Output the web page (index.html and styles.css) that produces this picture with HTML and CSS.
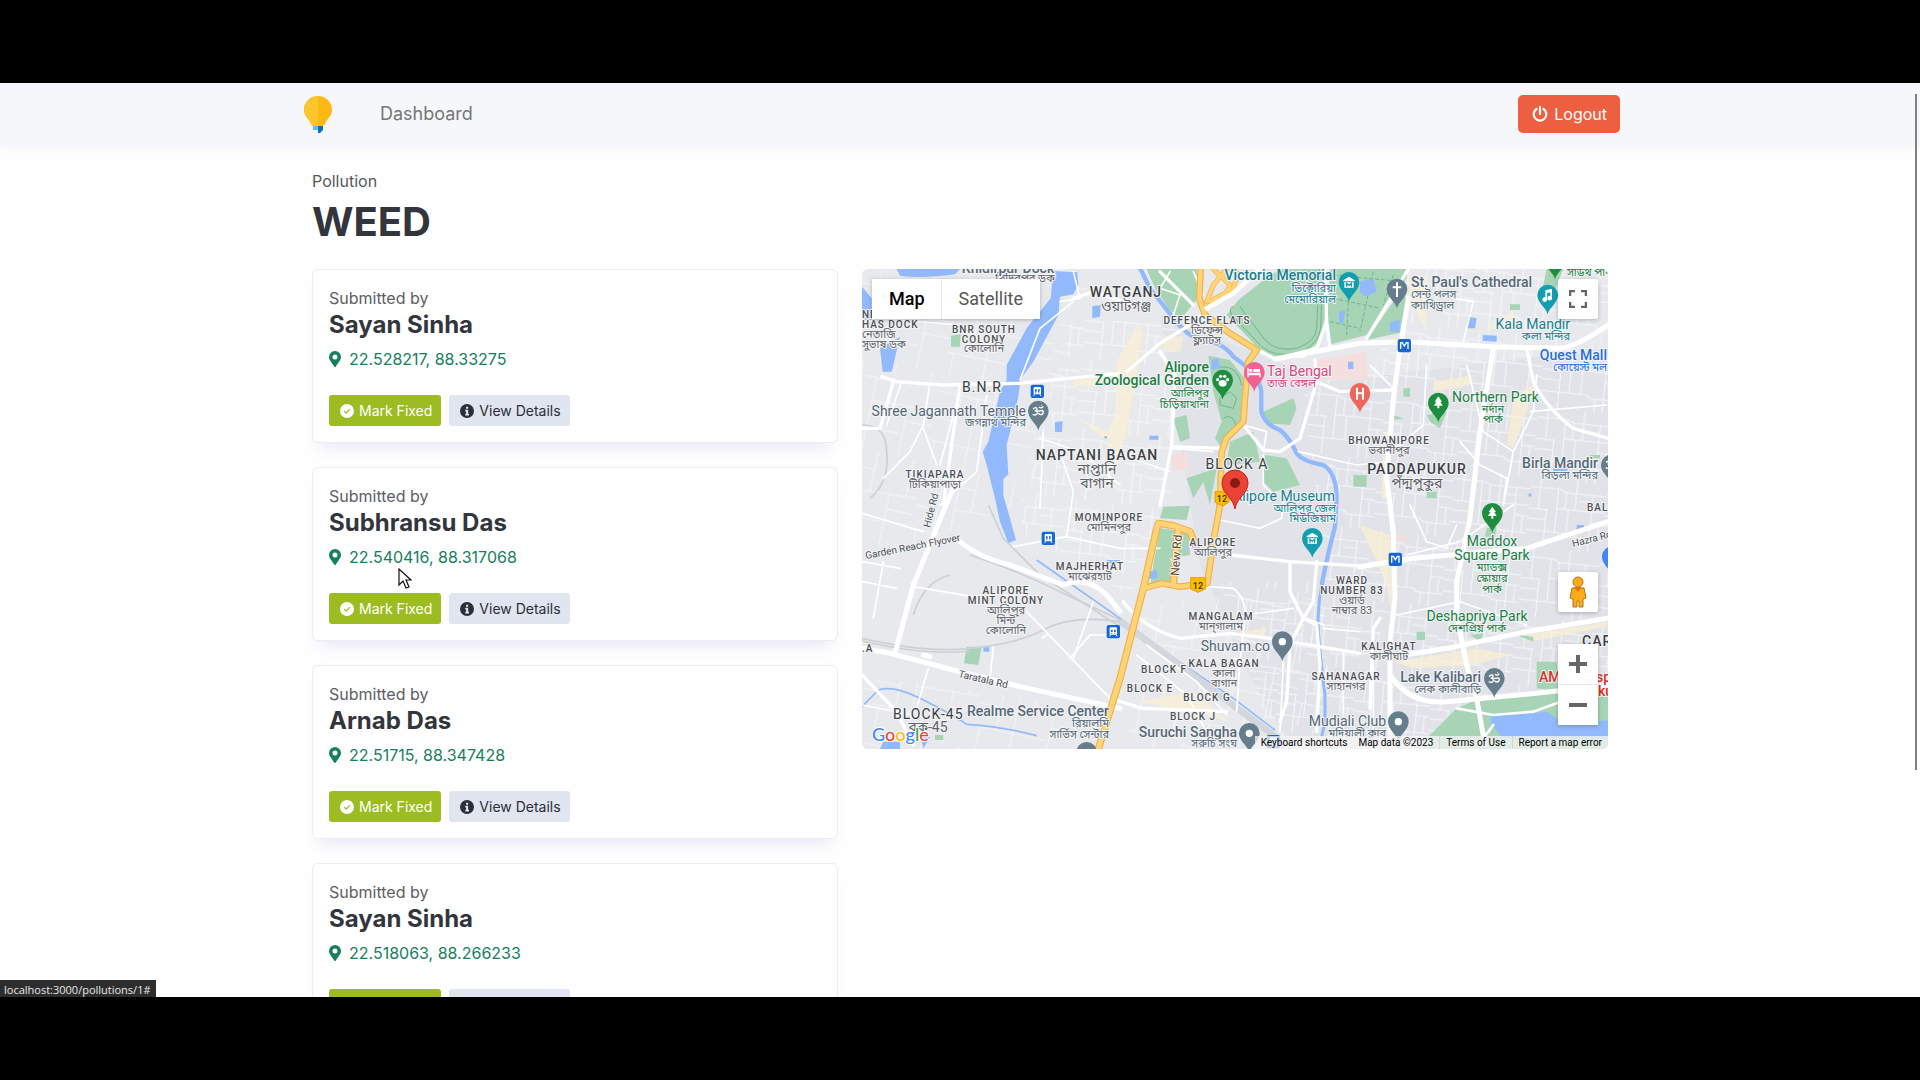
FILE: index.html
```html
<!DOCTYPE html>
<html lang="en">
<head>
<meta charset="utf-8">
<title>Pollution - WEED</title>
<link rel="stylesheet" href="styles.css">
</head>
<body>
<svg class="defs" aria-hidden="true">
  <symbol id="i-pin" viewBox="0 0 384 512"><path fill="currentColor" fill-rule="evenodd" d="M172 502C27 291 0 270 0 192a192 192 0 1 1 384 0c0 78-27 99-172 310a24 24 0 0 1-40 0zM192 272a80 80 0 1 0 0-160 80 80 0 0 0 0 160z"/></symbol>
  <symbol id="i-check" viewBox="0 0 16 16"><circle cx="8" cy="8" r="8" fill="currentColor"/><path d="M4.800 8.200l2.200 2.300 4.300-4.700" fill="none" stroke="#9dbc21" stroke-width="1.400"/></symbol>
  <symbol id="i-info" viewBox="0 0 16 16"><circle cx="8" cy="8" r="8" fill="currentColor"/><path d="M7 3h2.300v2.300H7zM6 6.500h3.300v4.500h1V13H6v-2h1V8.500H6z" fill="#e0e5ef"/></symbol>
</svg>
<div class="screen">
  <header class="navbar">
    <div class="container navbar-inner">
      <a class="brand" href="#" aria-label="Home">
        <svg width="30" height="38" viewBox="0 0 30 38"><path d="M15 1a14 14 0 0 0-14 14c0 6 5 9 6 12l1 2q1 2 3 2h8q2 0 3-2l1-2c1-3 6-6 6-12A14 14 0 0 0 15 1z" fill="#fdb913"/><path d="M15 1a14 14 0 0 0-14 14c0 6 5 9 6 12l1 2q1 2 3 2h4z" fill="#fbc52d"/><path d="M10 31h5v4h-5z" fill="#5bc0f2"/><path d="M15 31h5v4l-3 3h-2z" fill="#0b6fb8"/></svg>
      </a>
      <a class="nav-link" href="#">Dashboard</a>
      <button class="btn-logout" type="button">
        <svg width="16" height="16" viewBox="0 0 16 16"><path d="M4.500 3a6.300 6.300 0 1 0 7 0M8 1v7" fill="none" stroke="currentColor" stroke-width="2.200" stroke-linecap="round"/></svg>
        Logout
      </button>
    </div>
  </header>
  <main class="container">
    <p class="eyebrow">Pollution</p>
    <h1>WEED</h1>
    <div class="row">
      <section class="reports">
        <article class="card">
          <p>Submitted by</p><h2>Sayan Sinha</h2>
          <a class="coords" href="#"><svg><use href="#i-pin"/></svg>22.528217, 88.33275</a>
          <div class="actions"><button class="btn fix"><svg><use href="#i-check"/></svg>Mark Fixed</button><button class="btn view"><svg><use href="#i-info"/></svg>View Details</button></div>
        </article>
        <article class="card">
          <p>Submitted by</p><h2>Subhransu Das</h2>
          <a class="coords" href="#"><svg><use href="#i-pin"/></svg>22.540416, 88.317068</a>
          <div class="actions"><button class="btn fix"><svg><use href="#i-check"/></svg>Mark Fixed</button><button class="btn view"><svg><use href="#i-info"/></svg>View Details</button></div>
        </article>
        <article class="card">
          <p>Submitted by</p><h2>Arnab Das</h2>
          <a class="coords" href="#"><svg><use href="#i-pin"/></svg>22.51715, 88.347428</a>
          <div class="actions"><button class="btn fix"><svg><use href="#i-check"/></svg>Mark Fixed</button><button class="btn view"><svg><use href="#i-info"/></svg>View Details</button></div>
        </article>
        <article class="card">
          <p>Submitted by</p><h2>Sayan Sinha</h2>
          <a class="coords" href="#"><svg><use href="#i-pin"/></svg>22.518063, 88.266233</a>
          <div class="actions"><button class="btn fix"><svg><use href="#i-check"/></svg>Mark Fixed</button><button class="btn view"><svg><use href="#i-info"/></svg>View Details</button></div>
        </article>
      </section>
      <section class="map-col">
        <div class="map">
          <svg class="map-canvas" viewBox="0 0 746 480" preserveAspectRatio="xMidYMid slice">
            <svg width="746" height="480" viewBox="6 12 2238 1440">
              <defs>
                <pattern id="streets-a" width="230" height="210" patternUnits="userSpaceOnUse" patternTransform="rotate(6)">
                  <path d="M0 30H90L110 38H230M0 95H60M84 88H230M0 160H140L150 170H230M30 0V95M85 30V160M140 0V88M190 38V210M55 95V210M120 88V160M165 170V210M110 38V88M0 125H55M190 120H230M215 120V170M150 60H190" fill="none" stroke="#f6f7f9" stroke-width="3"/>
                </pattern>
                <pattern id="streets-b" width="310" height="270" patternUnits="userSpaceOnUse" patternTransform="rotate(12)">
                  <path d="M0 50H170M120 120L310 110M0 200H220M70 0V200M170 0V120M230 110V270M120 50V270M280 0V110M20 200V270M230 160H310M0 130H70" fill="none" stroke="#f4f5f7" stroke-width="3"/>
                </pattern>
                <path id="p" d="M0 58C-4 38-31 24-31 0A31 31 0 1 1 31 0C31 24 4 38 0 58Z"/>
                <path id="tree" d="M0-20L-11-4h5L-13 8h10v8h6V8h10L6-4h5z" fill="#fff"/>
                <g id="train"><rect x="-20" y="-20" width="40" height="40" rx="6" fill="#1967d2"/><path d="M-11-9q0-4 4-4h14q4 0 4 4V9h-22z" fill="#fff"/><path d="M-7-6h5v7h-5zM2-6h5v7H2zM-6 3h3v3h-3zM3 3h3v3H3z" fill="#1967d2"/><path d="M-8 9l-3 5M8 9l3 5" stroke="#fff" stroke-width="3"/></g>
                <g id="museum"><path d="M-17-6L0-17 17-6v3h-34zM-14 0h28v16h-28z" fill="#fff"/><path d="M-7 13V3l7 6 7-6v10" stroke="#129eaf" stroke-width="4" fill="none"/></g>
                <path id="om" d="M-16-8q12-8 12 0 0 5-7 5 9 1 8 8-3 8-14 3M-3-2h8q7-4 10 2 0 9-8 9-5 0-6-5M2-14q7 6 13-2M8-19h2" fill="none" stroke="#fff" stroke-width="4"/>
              </defs>
              <path fill="#e7e9ed" d="M0 0H2300V1500H0z"/>
              <path fill="#e1e3e9" d="M900 150L1400 350 2250 250V1460H1300L1150 1200 1020 900z"/>
              <!-- built-up street meshes -->
              <path fill="url(#streets-b)" d="M0 0H700L520 700 0 900zM0 1230L700 1330V1460H0zM850 1000L1400 1000V1460H800z"/>
              <path fill="url(#streets-a)" d="M640 160L950 180 930 720 820 1000 480 800 540 500zM1320 320L2250 250V1460H1330L1400 900zM1560 12H2250V300H1560zM1080 950H1400V1460H1250z"/>
              <!-- commercial strips and campuses -->
              <g fill="#fbefd2" opacity=".7">
                <path d="M640 345L780 335 770 355 640 365zM655 460L740 500 770 440 790 520 770 620 745 530zM770 290L830 180 850 200 800 500 770 600zM910 210L970 215 960 260 910 255zM1640 40L1700 30 1700 200 1660 120zM1880 180L1960 140 1970 180 1890 195zM1720 350L1840 330 1830 360 1720 380zM1960 400L2030 350 2010 410 1960 550 1940 540zM1500 780L1590 810 1610 960 1600 1080 1580 960zM1600 1190L1850 1150 1950 1170 1840 1200 1660 1210zM2000 1110L2240 1070V1085L2010 1130zM830 1310L1000 1280 1110 1370 1000 1340zM1140 1100L1220 1090 1210 1115 1140 1120zM1570 500L1595 500 1580 700 1565 700z"/>
              </g>
              <path fill="#f5dede" d="M1360 285L1515 262 1525 345 1370 345zM930 570L980 560 985 610 940 620zM1600 815L1640 810 1635 840z"/>
              <g fill="#a6d4b5">
                <path d="M860 12H1010V105L960 165 925 130 885 70zM1100 150L1135 105 1230 30 1270 12H1395L1400 130 1380 230 1320 272 1245 278 1195 250zM1412 12H1640V40L1580 120 1520 210 1405 240 1400 160zM1620 80L1650 110 1635 200 1520 225zM1045 272L1110 285 1150 335 1150 480 1110 510 1085 550 1065 520 1085 470 1060 380zM1210 440L1300 400 1310 430 1290 480 1220 475zM940 460L980 450 990 520 960 530zM1110 530L1180 500 1200 590 1100 600zM1215 570L1280 580 1320 660 1240 680 1210 650zM980 640L1070 610 1050 720 1030 650 1000 700zM273 212L302 208 300 245 273 245zM910 725L990 722 980 765 900 760zM900 790L985 800 990 870 930 880 950 950 870 970 880 900zM2060 12H2110L2070 110 2050 60zM1950 118H1980V135H1950zM1700 450L1760 440 1740 490 1710 470zM1880 790L1910 785 1905 815 1875 815zM1670 1100H1695V1125H1670zM1830 1110L1870 1105 1860 1130zM1970 1110L2020 1115 2020 1130zM2030 1190L2090 1190 2100 1280 2030 1270zM1700 1420L1790 1330 1860 1300 2110 1275 2244 1260V1452H1690zM1630 370H1650V395H1630zM1600 450L1630 460 1600 465zM1480 630H1520V665H1480zM1700 680H1730V700H1700zM2190 570H2220V580H2190zM320 1145L365 1145 355 1200 312 1195zM225 1410H250V1425H225z"/>
              </g>
              <g fill="none" stroke="#74b38a" stroke-width="3">
                <path d="M1122 125Q1105 125 1115 150L1205 245Q1245 280 1320 263 1378 235 1382 190L1388 12M1140 125L1215 225Q1250 262 1310 250 1368 230 1370 190L1378 12"/>
                <path stroke-dasharray="12 6" d="M1420 30L1630 50M1420 100L1560 130M1410 170L1500 190M1470 20L1460 210M1540 20L1500 200M1600 30L1570 120"/>
                <path d="M1080 400L1110 380 1130 400 1120 430 1080 420zM1090 460Q1120 440 1130 490M1060 310Q1130 290 1145 360"/>
              </g>
              <!-- water -->
              <g fill="#92b9fb">
                <path d="M110 12H300L285 28Q180 42 120 32zM6 65L35 100V165H6zM60 250L120 215 95 320H68zM580 18L652 22 655 60 640 88 600 95 595 150 520 290 482 342 475 395 450 500 440 540 445 628 430 642 430 690 468 825 445 835 420 770 405 700 380 600 368 560 385 530 420 380 440 345 440 300 500 190 572 100zM697 124L722 120 720 155 697 160zM585 472L608 468 606 502 585 500zM868 512H895V524H868zM1055 285L1075 280 1080 310 1055 315zM1437 140L1455 138 1450 175 1437 172zM1464 290H1480V312H1464zM1500 50L1540 40 1550 80 1515 95 1500 80zM1590 170L1620 165 1618 200 1590 200zM1825 155L1850 160 1845 190 1820 190zM1868 210L1910 212V230L1868 228zM2080 610H2122V620H2080zM2150 780H2172V795H2150zM863 920L890 915 892 940 865 942zM370 1145H388V1160H370zM740 885H780V896H740zM180 1410L200 1395 210 1420 190 1450zM1890 1350L1960 1350 2060 1340 2120 1380 2244 1365V1420H1930L1895 1380zM70 1430H120V1452H60z"/>
                <circle cx="737" cy="517" r="4"/><circle cx="2010" cy="690" r="5"/>
              </g>
              <g fill="none" stroke="#92b9fb">
                <path stroke-width="13" d="M838 5L870 70 925 140Q970 200 1000 215 1090 230 1120 275 1200 330 1204 380V440Q1215 480 1260 495 1290 520 1310 565 1330 590 1390 600 1430 625 1430 700L1425 785Q1400 880 1385 960"/>
                <path stroke-width="9" d="M1385 960Q1372 1030 1375 1100 1383 1200 1395 1290V1370L1385 1415"/>
                <path stroke-width="5" d="M530 885L780 1060 950 1185 1120 1300 1245 1395M6 1325L55 1275Q100 1260 180 1300 280 1350 320 1378 430 1385 530 1412"/>
              </g>
              <!-- railway lines -->
              <g fill="none" stroke="#cdcfd4" stroke-width="5">
                <path d="M6 1120Q200 1165 330 1150 480 1135 560 1090 640 1050 780 1070L950 1200 1260 1430M330 870Q480 920 600 980L780 1065M6 1128Q200 1173 330 1158M385 720L430 820 540 930 780 1085M6 480Q80 480 80 560 90 650 30 700M160 1050Q190 950 270 930"/>
                <path stroke-width="20" stroke="#d3d6dd" d="M780 1068L1280 1440"/>
              </g>
              <!-- secondary roads -->
              <g fill="none" stroke="#fff" stroke-linecap="round" stroke-linejoin="round">
                <path stroke-width="5" d="M60 160L300 180M125 350L80 480M210 355L190 480 150 560 70 640M300 375L240 600M380 390L350 620 240 720M6 745L90 770 190 800M160 965L370 1000M190 490L230 600M480 345L540 190 640 110M640 20L660 100 600 110M540 520L660 560 780 660M460 845L620 815 780 850 900 850M620 815L640 680 600 560M500 1040L750 1300M630 1180L690 1110 780 1110M6 1320L160 1350M205 1210L170 1330M400 1145L390 1240M545 1120L560 1110M700 1010L640 1180M980 960L1120 970Q1160 1000 1155 1060L1140 1190 1130 1340M1155 1050L1300 1030M1080 765L1200 790 1265 760 1270 700M1210 560L1220 500 1150 480M1210 570L1210 660 1240 690M1315 560L1490 600 1590 590M1800 530L1860 600 1940 640 1930 720M1530 300L1600 370M1780 100L1840 110 1810 230M1700 300L1690 480 1620 540M2030 330L2020 440 1960 560 1930 720M2010 440L2240 420M1650 720L1700 830 1760 850 1790 780M1610 1050L1800 1010 2000 1080M1640 870L1800 830 1960 720M1820 300L1870 500 1960 560M1340 1060L1390 1080M1450 1160V1420M1540 1160V1400M1060 560L940 550M930 620L760 560M550 500L540 730M470 1010L420 980M6 890L120 910M6 950L110 970M70 890L40 1060M1030 90L1000 20M930 20L900 70 960 90 940 150M830 1170L980 1290 1040 1400M860 1140L1010 1250 1100 1350M1180 1190L1120 1180M1270 1190L1260 1400M1500 1100L1390 1090"/>
                <path stroke-width="10" d="M65 335L110 350 250 360 475 355 780 325M800 320L900 235 990 180 1080 100M900 260L945 330 935 540 900 720M935 545L1090 550M1150 480L1210 555 1260 560 1320 520 1370 350 1365 285M1245 282L1205 260M1395 12L1400 170 1370 250 1245 282M1400 170L1410 245M1645 12L1580 120 1520 220M2000 250L2020 350Q2060 430 2140 490L2244 520M6 490L60 490 100 350M1370 350L1440 380 1600 375M1290 270L1330 275M640 100L700 80 790 110M250 720L300 360M1560 1060L1540 1090 1535 1200 1530 1330M900 20L1000 120M790 1010Q850 1090 960 1120L1110 1105 1230 1120 1500 1165M1370 890L1360 1010 1330 1060 1290 1140 1280 1310 1260 1370M1290 890L1290 980 1330 1060 1370 1080 1380 1200 1370 1400M6 1230L110 1340 160 1440M750 1300L850 1330 1100 1340M1110 870L1290 890 1530 905"/>
                <path stroke-width="15" d="M1245 282L1500 235 1640 230 1900 245 2100 250Q2150 245 2244 180M1645 100L1620 250 1600 400 1580 640 1600 800 1605 1000 1590 1130 1590 1230Q1650 1320 1760 1310L2030 1285 2244 1260M1900 250L1860 500 1830 760 1790 950 1790 1050 1820 1200 1850 1300 1875 1440M1500 905L1660 880 2000 850 2244 770M1600 1175L1760 1150 2000 1100 2244 1060M6 1150L90 1165 280 1215 480 1265 780 1330M105 1165L160 960 250 740 300 620M300 830Q360 880 450 900L610 960Q680 930 740 990L780 1040M1590 1230L1590 1440M190 1170L210 1175"/>
                <path stroke-width="8" d="M1790 1330L1900 1350 2020 1340 2130 1300M1870 1420L1900 1380"/>
              </g>
              <!-- highway -->
              <g fill="none" stroke-linejoin="round" stroke-linecap="round">
                <g stroke="#f1b04a">
                  <path stroke-width="20" d="M1022 12L1018 100 1035 150 1110 205 1190 255 1165 290 1155 400 1150 470 1100 520 1085 560 1080 720 1060 830 1042 955 960 965 905 955 850 970"/>
                  <path stroke-width="22" d="M1080 720L1100 700M850 970L780 1240 715 1452M850 970L890 790 895 775 940 782 990 800 1010 850M955 790L940 960"/>
                  <path stroke-width="15" d="M1060 12L1110 60 1090 100 1035 130M1100 12L1060 60 1040 110M1135 25L1120 70 1050 110"/>
                </g>
                <g stroke="#ffd476">
                  <path stroke-width="13" d="M1022 12L1018 100 1035 150 1110 205 1190 255 1165 290 1155 400 1150 470 1100 520 1085 560 1080 720 1060 830 1042 955 960 965 905 955 850 970"/>
                  <path stroke-width="15" d="M850 970L780 1240 715 1452M850 970L890 790 895 775 940 782 990 800 1010 850M955 790L940 960"/>
                  <path stroke-width="11" d="M1060 12L1110 60 1090 100 1035 130M1100 12L1060 60 1040 110M1135 25L1120 70 1050 110"/>
                </g>
              </g>
              <path d="M1035 133L1120 85 1200 12" fill="none" stroke="#fff" stroke-width="14"/>
              <g fill="#fbbc04" stroke="#f29900" stroke-width="3"><path d="M1065 680H1107V712L1086 722 1065 712zM992 938H1036V972L1014 982 992 972z"/></g>
              <!-- places -->
              <g fill="#667d8b">
                <use href="#p" x="535" y="438"/><use href="#p" x="1611" y="72"/><use href="#p" x="2254" y="600"/><use href="#p" x="1267" y="1130"/><use href="#p" x="1903" y="1240"/><use href="#p" x="1615" y="1370"/><use href="#p" x="1168" y="1405"/><use href="#p" x="680" y="1462"/>
              </g>
              <g fill="#129eaf"><use href="#p" x="1467" y="52"/><use href="#p" x="2063" y="90"/><use href="#p" x="1357" y="820"/></g>
              <g fill="#1e8e3e"><use href="#p" x="1088" y="345"/><use href="#p" x="1735" y="414"/><use href="#p" x="1897" y="745"/><use href="#p" x="2085" y="-15"/></g>
              <use href="#p" x="1183" y="322" fill="#f06292"/><use href="#p" x="1500" y="385" fill="#ee675c"/><use href="#p" x="2257" y="875" fill="#4285f4"/>
              <use href="#museum" x="1467" y="52"/><use href="#museum" x="1357" y="820"/>
              <use href="#tree" x="1735" y="414"/><use href="#tree" x="1897" y="745"/>
              <use href="#om" x="535" y="440"/><use href="#om" x="1903" y="1242"/><use href="#om" x="2254" y="600"/>
              <g fill="#fff"><circle cx="1267" cy="1130" r="11"/><circle cx="1615" cy="1370" r="11"/><circle cx="1168" cy="1405" r="11"/>
                <ellipse cx="1088" cy="355" rx="12" ry="10"/><circle cx="1073" cy="344" r="5"/><circle cx="1082" cy="334" r="5"/><circle cx="1094" cy="334" r="5"/><circle cx="1103" cy="344" r="5"/>
                <path d="M1608 52h6v12h10v6h-10v26h-6V70h-10v-6h10zM1162 308h4v15h36v14h-4v-6h-32v6h-4zM1180 312h20v9h-20zM1488 368h6v14h12v-14h6v36h-6v-16h-12v16h-6zM2056 76l20-5v28a7 7 0 1 1-5-6V82l-10 3v18a7 7 0 1 1-5-6z"/><circle cx="1172" cy="316" r="5"/></g>
              <use href="#train" x="532" y="379"/><use href="#train" x="565" y="820"/><use href="#train" x="760" y="1100"/><use href="#train" x="1240" y="1430"/>
              <g fill="#1967d2"><rect x="1613" y="222" width="40" height="40" rx="6"/><rect x="1586" y="863" width="40" height="40" rx="6"/></g>
              <path d="M1622 252v-19h5l6 10 6-10h5v19M1595 893v-19h5l6 10 6-10h5v19" fill="none" stroke="#fff" stroke-width="4"/>
            </svg>
            <g class="lbl area">
              <text x="0" y="49">NE</text><text x="0" y="59">HAS DOCK</text><text class="mid" x="122" y="64">BNR SOUTH</text><text class="mid" x="122" y="74">COLONY</text>
              <text class="mid" x="345" y="55">DEFENCE FLATS</text><text class="mid" x="73" y="209">TIKIAPARA</text><text class="mid" x="527" y="175">BHOWANIPORE</text>
              <text class="mid" x="247" y="252">MOMINPORE</text><text class="mid" x="228" y="301">MAJHERHAT</text><text class="mid" x="144" y="325">ALIPORE</text><text class="mid" x="144" y="335">MINT COLONY</text>
              <text class="mid" x="351" y="277">ALIPORE</text><text class="mid" x="359" y="351">MANGALAM</text><text class="mid" x="490" y="315">WARD</text><text class="mid" x="490" y="325">NUMBER 83</text>
              <text class="mid" x="302" y="404">BLOCK F</text><text class="mid" x="288" y="423">BLOCK E</text><text class="mid" x="345" y="432">BLOCK G</text><text class="mid" x="331" y="451">BLOCK J</text>
              <text class="mid" x="362" y="398">KALA BAGAN</text><text class="mid" x="484" y="411">SAHANAGAR</text><text class="mid" x="527" y="381">KALIGHAT</text><text x="725" y="242">BAL</text><text x="0" y="383">.A</text>
            </g>
            <g class="lbl district">
              <text class="mid" x="264" y="28">WATGANJ</text><text class="mid light" x="120" y="123">B.N.R</text><text class="mid" x="235" y="191">NAPTANI BAGAN</text><text class="mid" x="555" y="205">PADDAPUKUR</text>
              <text class="mid light" x="375" y="200">BLOCK A</text><text class="light" x="31" y="450">BLOCK-45</text><text x="720" y="377">CAR</text>
            </g>
            <g class="lbl bn">
              <text class="mid" x="163" y="13">খিদিরপুর ডক</text><text x="0" y="69">নেতাজি</text><text x="0" y="79">সুভাষ ডক</text><text class="mid" x="122" y="83">কোলোনি</text><text class="mid" x="345" y="65">ডিফেন্স</text><text class="mid" x="345" y="75">ফ্ল্যাটস</text>
              <text class="mid" x="73" y="219">টিকিয়াপাড়া</text><text class="mid" x="527" y="185">ভবানীপুর</text><text class="mid" x="247" y="262">মোমিনপুর</text><text class="mid" x="228" y="311">মাঝেরহাট</text>
              <text class="mid" x="144" y="345">আলিপুর</text><text class="mid" x="144" y="355">মিন্ট</text><text class="mid" x="144" y="365">কোলোনি</text><text class="mid" x="351" y="287">আলিপুর</text><text class="mid" x="359" y="361">মান্‌গালাম</text>
              <text class="mid" x="490" y="335">ওয়ার্ড</text><text class="mid" x="490" y="345">নাম্বার 83</text><text class="mid" x="362" y="408">কালা</text><text class="mid" x="362" y="418">বাগান</text><text class="mid" x="484" y="421">সাহানগর</text><text class="mid" x="527" y="391">কালীঘাট</text>
            </g>
            <g class="lbl bn large"><text class="mid" x="264" y="42">ওয়াটগঞ্জ</text><text class="mid" x="235" y="205">নাপ্তানি</text><text class="mid" x="235" y="219">বাগান</text><text class="mid" x="555" y="219">পঁদ্মপুকুর</text><text class="mid" x="66" y="463">ব্লক-45</text></g>
            <g class="lbl place slate">
              <text class="mid" x="146" y="4">Khidirpur Dock</text><text class="end light" x="164" y="147">Shree Jagannath Temple</text><text x="549" y="18">St. Paul's Cathedral</text><text class="end" x="736" y="199">Birla Mandir</text>
              <text class="end light" x="408" y="382">Shuvam.co</text><text class="end" x="619" y="413">Lake Kalibari</text><text class="end light" x="524" y="457">Mudiali Club</text><text class="end" x="375" y="468">Suruchi Sangha</text><text class="end" x="247" y="447">Realme Service Center</text>
              <g class="sub"><text class="end" x="164" y="157">জগন্নাথ মন্দির</text><text x="549" y="29">সেন্ট পলস</text><text x="549" y="40">ক্যাথিড্রাল</text><text class="end" x="736" y="210">বিড়লা মন্দির</text><text class="end" x="619" y="424">লেক কালীবাড়ি</text><text class="end" x="524" y="468">মদিয়ালী ক্লাব</text><text class="end" x="375" y="478">সরুচি সংঘ</text><text class="end" x="247" y="458">রিয়ালমি</text><text class="end" x="247" y="469">সার্ভিস সেন্টার</text></g>
            </g>
            <g class="lbl place teal">
              <text class="end" x="474" y="11">Victoria Memorial</text><text class="end light" x="708" y="60">Kala Mandir</text><text class="end light" x="473" y="232">Alipore Museum</text>
              <g class="sub"><text class="end" x="474" y="23">ভিক্টোরিয়া</text><text class="end" x="474" y="34">মেমোরিয়াল</text><text class="end" x="708" y="71">কলা মন্দির</text><text class="end" x="474" y="243">আলিপুর জেল</text><text class="end" x="474" y="253">মিউজিয়াম</text></g>
            </g>
            <g class="lbl place green">
              <text class="end" x="347" y="103">Alipore</text><text class="end" x="347" y="116">Zoological Garden</text><text class="light" x="590" y="133">Northern Park</text><text class="mid light" x="630" y="277">Maddox</text><text class="mid light" x="630" y="291">Square Park</text><text class="mid light" x="615" y="352">Deshapriya Park</text>
              <g class="sub"><text class="end" x="347" y="128">আলিপুর</text><text class="end" x="347" y="139">চিড়িয়াখানা</text><text class="mid" x="631" y="144">নর্দান</text><text class="mid" x="631" y="154">পার্ক</text><text class="mid" x="630" y="302">ম্যাডক্স</text><text class="mid" x="630" y="313">স্কোয়ার</text><text class="mid" x="630" y="324">পার্ক</text><text class="mid" x="615" y="363">দেশপ্রিয় পার্ক</text><text x="705" y="7">সাউথ পার্ক</text></g>
            </g>
            <g class="lbl place pink"><text class="light" x="405" y="107">Taj Bengal</text><text class="small" x="405" y="118">তাজ বেঙ্গল</text></g>
            <g class="lbl place blue"><text class="end" x="745" y="91">Quest Mall</text><text class="small end" x="745" y="102">কোয়েস্ট মল</text></g>
            <g class="lbl place red"><text x="677" y="413">AM</text><text x="734" y="413">sp</text><text x="736" y="427">ku</text></g>
            <g class="lbl road">
              <text transform="translate(68 259) rotate(-76)">Hide Rd</text><text transform="translate(4 290) rotate(-11)">Garden Reach Flyover</text><text transform="translate(317 307) rotate(-86)" class="brown">New Rd</text>
              <text transform="translate(96 408) rotate(13)">Taratala Rd</text><text transform="translate(711 278) rotate(-14)">Hazra Rd</text>
            </g>
            <g class="shield"><text x="360" y="233">12</text><text x="336" y="320">12</text></g>
            <path d="M373 240C371 228 360 225 360 214A13 13 0 0 1 386 214C386 225 375 228 373 240Z" fill="#ea4335" stroke="#c5221f"/><circle cx="373" cy="214" r="5" fill="#8b1a14"/>
            <text class="glogo" x="10" y="472"><tspan fill="#4285f4">G</tspan><tspan fill="#ea4335">o</tspan><tspan fill="#fbbc04">o</tspan><tspan fill="#4285f4">g</tspan><tspan fill="#34a853">l</tspan><tspan fill="#ea4335">e</tspan></text>
          </svg>
          <div class="map-type"><button type="button" class="on">Map</button><button type="button">Satellite</button></div>
          <button type="button" class="ctl full" aria-label="Toggle fullscreen view"><svg width="18" height="18" viewBox="0 0 18 18"><path d="M1 6V1h5M12 1h5v5M17 12v5h-5M6 17H1v-5" fill="none" stroke="#666" stroke-width="2.500"/></svg></button>
          <div class="map-side">
            <button type="button" class="ctl" aria-label="Street View"><svg width="20" height="32" viewBox="0 0 20 32"><path d="M4 12h12l2 10-3 1v8h-4v-6h-2v6H5v-8l-3-1z" fill="#f9ab1b" stroke="#b57313"/><circle cx="10" cy="6" r="5" fill="#f9ab1b" stroke="#b57313"/><path d="M6 11h8l-4 5z" fill="#e8710a"/></svg></button>
            <div class="zoom"><button type="button" class="ctl" aria-label="Zoom in"><svg width="18" height="18" viewBox="0 0 18 18"><path d="M9 0v18M0 9h18" stroke="#666" stroke-width="4"/></svg></button><button type="button" class="ctl" aria-label="Zoom out"><svg width="18" height="18" viewBox="0 0 18 18"><path d="M0 9h18" stroke="#666" stroke-width="4"/></svg></button></div>
          </div>
          <div class="attrib"><button type="button">Keyboard shortcuts</button><span>Map data ©2023</span><a href="#">Terms of Use</a><a href="#">Report a map error</a></div>
        </div>
      </section>
    </div>
  </main>
  <div class="status">localhost:3000/pollutions/1#</div>
  <div class="scroll-thumb"></div>
  <svg class="cursor" width="14" height="21" viewBox="0 0 14 21"><path d="M1 1v16l4-4 3 7 3-1-3-7h5z" fill="#fff" stroke="#111" stroke-width="1.200"/></svg>
</div>
</body>
</html>
```
FILE: styles.css
```css
* { box-sizing: border-box; }
body {
  margin: 0;
  min-height: 100vh;
  padding: 83px 0;
  background: #000;
  color: #32363c;
  font: 16px/24px Inter, "Noto Sans", sans-serif;
}
p, h1, h2 { margin: 0; }
button { font-family: inherit; border: 0; cursor: pointer; }
.defs { position: absolute; width: 0; height: 0; }
.screen {
  position: relative;
  height: calc(100vh - 166px);
  overflow: hidden;
  background: #fefefe;
}
.container { max-width: 1320px; margin: 0 auto; }

.navbar { padding-bottom: 2px; background: #f6f7fa; box-shadow: 0 1px 8px rgba(60, 70, 90, .04); }
.navbar-inner { display: flex; align-items: center; height: 62px; padding-left: 3px; }
.brand { display: flex; margin-right: 47px; }
.nav-link { color: #747678; font-size: 18px; text-decoration: none; }
.btn-logout {
  display: flex;
  align-items: center;
  gap: 6px;
  margin-left: auto;
  padding: 7px 13px 7px 14px;
  border-radius: 5px;
  background: #ec5f40;
  color: #fff;
  font-size: 16px;
  line-height: 24px;
}

main.container { padding: 22px 12px 0; }
.eyebrow { color: #55585c; }
h1 { margin: 5px 0 23px; font-size: 40px; line-height: 48px; font-weight: 700; }
.row { display: flex; margin: 0 -12px; align-items: flex-start; }
.reports, .map-col { padding: 0 12px; }
.reports { width: 41.6667%; display: flex; flex-direction: column; gap: 24px; }
.map-col { width: 58.3333%; }

.card {
  padding: 16px;
  border: 1px solid #ededf0;
  border-radius: 6px;
  background: #fefefe;
  box-shadow: 0 12px 14px -8px rgba(110, 90, 220, .15);
}
.card p { color: #5d6064; }
.card h2 { font-size: 24px; line-height: 29px; font-weight: 700; }
.coords {
  display: flex;
  align-items: center;
  gap: 8px;
  margin-top: 8px;
  color: #16805c;
  text-decoration: none;
}
.coords svg { width: 12px; height: 16px; }
.actions { display: flex; gap: 8px; margin-top: 24px; }
.btn {
  display: flex;
  align-items: center;
  gap: 5px;
  height: 31px;
  padding: 0 9px 0 11px;
  border-radius: 3px;
  font-size: 14px;
}
.btn svg { width: 14px; height: 14px; }
.fix { background: #9dbc21; color: #fff; }
.view { background: #e0e5ef; color: #2b2f38; }

.map {
  position: relative;
  height: 480px;
  overflow: hidden;
  border-radius: 6px;
  font-family: Roboto, sans-serif;
}
.map-canvas { display: block; width: 100%; height: 100%; }
.lbl { fill: #4c4f54; stroke: #f3f4f6; stroke-width: 2px; stroke-linejoin: round; paint-order: stroke; font-family: Roboto, "Noto Sans Bengali", sans-serif; }
.mid { text-anchor: middle; }
.end { text-anchor: end; }
.area { font-size: 10px; font-weight: 500; letter-spacing: 1px; }
.district { font-size: 14px; font-weight: 500; letter-spacing: 1px; fill: #3c4043; }
.bn { font-size: 11px; fill: #5f6368; }
.large { font-size: 14px; }
.place { font-size: 14px; font-weight: 500; }
.sub, .small { font-size: 11px; font-weight: 400; }
.light { font-weight: 400; }
.slate { fill: #556877; }
.teal { fill: #16808f; }
.green { fill: #1a7f42; }
.pink { fill: #d8487f; }
.blue { fill: #2a6fdb; }
.red { fill: #d93025; }
.road { font-size: 10px; }
.brown { fill: #6b4a1e; font-size: 12px; }
.shield { font-size: 9px; font-weight: 500; text-anchor: middle; fill: #3c3000; }
.glogo { font: 500 18px Lato, sans-serif; stroke: #fff; stroke-width: 2px; paint-order: stroke; }

.map-type, .full, .map-side, .attrib { position: absolute; }
.map-type { top: 10px; left: 10px; display: flex; box-shadow: 0 1px 4px rgba(0, 0, 0, .25); }
.map-type button {
  height: 40px;
  padding: 0 17px 2px 17px;
  background: #fff;
  color: #565656;
  font-size: 18px;
}
.map-type .on { padding-right: 16px; color: #000; font-weight: 500; border-right: 1px solid #e8e8e8; }
.ctl {
  display: flex;
  align-items: center;
  justify-content: center;
  width: 40px;
  height: 40px;
  padding: 0;
  border-radius: 2px;
  background: #fff;
  box-shadow: 0 1px 4px rgba(0, 0, 0, .25);
}
.full { top: 10px; right: 10px; }
.map-side { right: 10px; bottom: 24px; display: flex; flex-direction: column; gap: 32px; }
.zoom { background: #fff; box-shadow: 0 1px 4px rgba(0, 0, 0, .25); }
.zoom .ctl { box-shadow: none; }
.zoom .ctl:first-child { border-bottom: 1px solid #e6e6e6; height: 41px; }
.attrib { right: 0; bottom: 0; display: flex; font-size: 10px; line-height: 12px; color: #000; }
.attrib > * {
  padding: 1px 6px 0;
  border-left: 1px solid #d5d7da;
  background: rgba(245, 245, 245, .75);
  color: inherit;
  font-size: inherit;
  line-height: inherit;
  text-decoration: none;
}
.attrib > button, .attrib > span { border: 0; }
.attrib > span { padding-left: 5px; }

.status {
  position: absolute;
  left: 0;
  bottom: 0;
  padding: 2px 5px 0 4px;
  background: #2d2d2d;
  color: #e8e8e8;
  font: 11px/15px "Open Sans", sans-serif;
}
.scroll-thumb { position: absolute; top: 11px; right: 3px; width: 2px; height: 74%; background: #808080; }
.cursor { position: absolute; left: 398px; top: 485px; }
```
